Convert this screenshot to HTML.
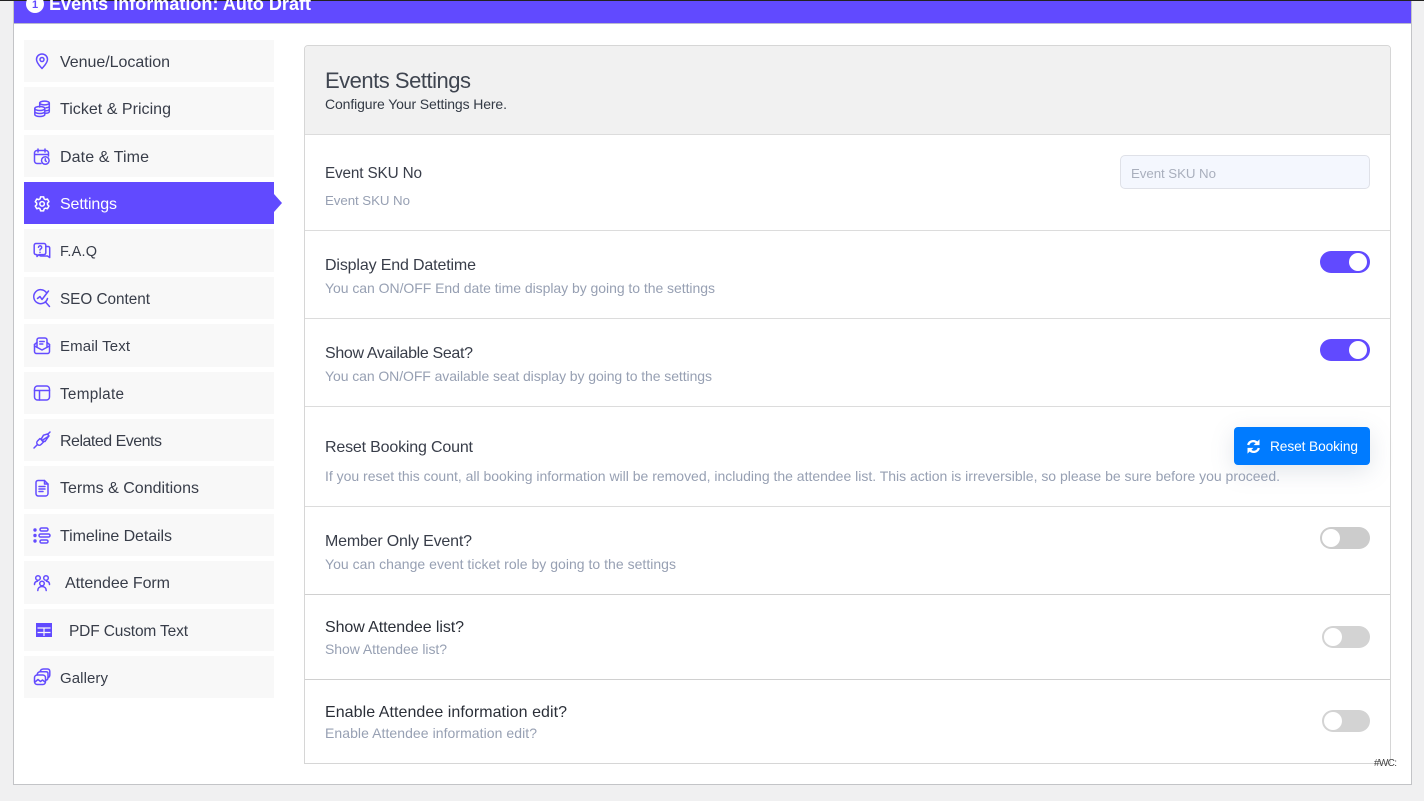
<!DOCTYPE html>
<html lang="en"><head><meta charset="utf-8"><title>Events Settings</title>
<style>
html,body{margin:0;padding:0;width:1424px;height:801px;overflow:hidden;background:#f0f0f1}
body{position:relative;font-family:"Liberation Sans",sans-serif}
.a{position:absolute;box-sizing:border-box}
.tg{position:absolute;width:50px;height:22px;border-radius:11px}
.tg i{position:absolute;top:2px;width:18px;height:18px;border-radius:50%;background:#fff}
svg{position:absolute;left:0;top:0}
text{font-family:"Liberation Sans",sans-serif}
.n{font-size:16px;fill:#383d49}
.l{font-size:16px;fill:#383d49}
.s{font-size:14px;fill:#97a0b3}
.ic{fill:none;stroke:#644cff;stroke-width:1.5;stroke-linecap:round;stroke-linejoin:round}
</style></head><body>
<div class="a" style="left:13px;top:0;width:1399px;height:785px;background:#fff;border:1px solid #c3c4c7;border-top:0"></div>
<div class="a" style="left:0;top:0;width:1424px;height:1px;background:#222"></div>
<div class="a" style="left:14px;top:1px;width:1397px;height:23px;background:#614aff;border-bottom:1px solid #b9b9d0"></div>

<div class="a" style="left:24px;top:40px;width:250px;height:42px;background:#f8f8f8"></div>
<div class="a" style="left:24px;top:87px;width:250px;height:43px;background:#f8f8f8"></div>
<div class="a" style="left:24px;top:135px;width:250px;height:42px;background:#f8f8f8"></div>
<div class="a" style="left:24px;top:182px;width:250px;height:42px;background:#614aff"></div>
<div class="a" style="left:274px;top:194px;width:0;height:0;border-left:8px solid #614aff;border-top:9px solid transparent;border-bottom:9px solid transparent"></div>
<div class="a" style="left:24px;top:229px;width:250px;height:43px;background:#f8f8f8"></div>
<div class="a" style="left:24px;top:277px;width:250px;height:42px;background:#f8f8f8"></div>
<div class="a" style="left:24px;top:324px;width:250px;height:43px;background:#f8f8f8"></div>
<div class="a" style="left:24px;top:372px;width:250px;height:42px;background:#f8f8f8"></div>
<div class="a" style="left:24px;top:419px;width:250px;height:42px;background:#f8f8f8"></div>
<div class="a" style="left:24px;top:466px;width:250px;height:43px;background:#f8f8f8"></div>
<div class="a" style="left:24px;top:514px;width:250px;height:42px;background:#f8f8f8"></div>
<div class="a" style="left:24px;top:561px;width:250px;height:43px;background:#f8f8f8"></div>
<div class="a" style="left:24px;top:609px;width:250px;height:42px;background:#f8f8f8"></div>
<div class="a" style="left:24px;top:656px;width:250px;height:42px;background:#f8f8f8"></div>

<div class="a" style="left:304px;top:45px;width:1087px;height:719px;border:1px solid #d6d6d6;border-radius:4px 4px 0 0"></div>
<div class="a" style="left:305px;top:46px;width:1085px;height:88px;background:#f1f1f1;border-radius:3px 3px 0 0"></div>
<div class="a" style="left:305px;top:134px;width:1085px;height:1px;background:#dcdcdc"></div>
<div class="a" style="left:305px;top:230px;width:1085px;height:1px;background:#dcdcdc"></div>
<div class="a" style="left:305px;top:318px;width:1085px;height:1px;background:#dcdcdc"></div>
<div class="a" style="left:305px;top:406px;width:1085px;height:1px;background:#dcdcdc"></div>
<div class="a" style="left:305px;top:506px;width:1085px;height:1px;background:#dcdcdc"></div>
<div class="a" style="left:305px;top:594px;width:1085px;height:1px;background:#d0d0d0"></div>
<div class="a" style="left:305px;top:679px;width:1085px;height:1px;background:#d0d0d0"></div>

<div class="a" style="left:1120px;top:155px;width:250px;height:34px;background:#f4f7fe;border:1px solid #dfe1e8;border-radius:5px"></div>
<div class="tg" style="left:1320px;top:251px;background:#614aff"><i style="left:29px"></i></div>
<div class="tg" style="left:1320px;top:339px;background:#614aff"><i style="left:29px"></i></div>
<div class="a" style="left:1234px;top:427px;width:136px;height:38px;background:#007bff;border-radius:4px;box-shadow:0 6px 24px rgba(90,110,140,.18)"></div>
<div class="tg" style="left:1320px;top:527px;background:#ccc"><i style="left:2px"></i></div>
<div class="tg" style="left:1322px;top:626px;width:48px;background:#d3d3d3"><i style="left:2px"></i></div>
<div class="tg" style="left:1322px;top:710px;width:48px;background:#d3d3d3"><i style="left:2px"></i></div>

<svg width="1424" height="801" viewBox="0 0 1424 801">
<circle cx="35" cy="4" r="9" fill="#fff"/>
<text x="35" y="8" font-size="11" font-weight="700" text-anchor="middle" fill="#614aff">1</text>
<text x="49" y="10" font-size="18" font-weight="700" fill="#fff" textLength="262" lengthAdjust="spacing">Events Information: Auto Draft</text>

<text class="n" x="60" y="67" textLength="110" lengthAdjust="spacing">Venue/Location</text>
<text class="n" x="60" y="114" textLength="111" lengthAdjust="spacing">Ticket &amp; Pricing</text>
<text class="n" x="60" y="162" textLength="89" lengthAdjust="spacing">Date &amp; Time</text>
<text x="60" y="209" font-size="16" fill="#fff" textLength="57" lengthAdjust="spacing">Settings</text>
<text class="n" style="font-size:14.5px" x="60" y="256" textLength="37" lengthAdjust="spacing">F.A.Q</text>
<text class="n" style="font-size:15.3px" x="60" y="304" textLength="90" lengthAdjust="spacing">SEO Content</text>
<text class="n" style="font-size:15px" x="60" y="351" textLength="70" lengthAdjust="spacing">Email Text</text>
<text class="n" style="font-size:15.3px" x="60" y="399" textLength="64" lengthAdjust="spacing">Template</text>
<text class="n" x="60" y="446" textLength="102" lengthAdjust="spacing">Related Events</text>
<text class="n" x="60" y="493" textLength="139" lengthAdjust="spacing">Terms &amp; Conditions</text>
<text class="n" x="60" y="541" textLength="112" lengthAdjust="spacing">Timeline Details</text>
<text class="n" x="65" y="588" textLength="105" lengthAdjust="spacing">Attendee Form</text>
<text class="n" style="font-size:15.500px" x="69" y="636" textLength="119" lengthAdjust="spacing">PDF Custom Text</text>
<text class="n" style="font-size:15px" x="60" y="683" textLength="48" lengthAdjust="spacing">Gallery</text>

<text x="325" y="88" font-size="22" fill="#3f4550" textLength="146" lengthAdjust="spacing">Events Settings</text>
<text x="325" y="109" font-size="14" fill="#333a45" textLength="182" lengthAdjust="spacing">Configure Your Settings Here.</text>
<text class="l" style="font-size:15.300px" x="325" y="178" textLength="97" lengthAdjust="spacing">Event SKU No</text>
<text class="s" style="font-size:13.300px" x="325" y="205" textLength="85" lengthAdjust="spacing">Event SKU No</text>
<text x="1131" y="178" font-size="13.300" fill="#a9afbd" textLength="85" lengthAdjust="spacing">Event SKU No</text>
<text class="l" x="325" y="270" textLength="151" lengthAdjust="spacing">Display End Datetime</text>
<text class="s" x="325" y="293" textLength="390" lengthAdjust="spacing">You can ON/OFF End date time display by going to the settings</text>
<text class="l" x="325" y="358" textLength="148" lengthAdjust="spacing">Show Available Seat?</text>
<text class="s" x="325" y="381" textLength="387" lengthAdjust="spacing">You can ON/OFF available seat display by going to the settings</text>
<text class="l" x="325" y="452" textLength="148" lengthAdjust="spacing">Reset Booking Count</text>
<text class="s" x="325" y="481" textLength="955" lengthAdjust="spacing">If you reset this count, all booking information will be removed, including the attendee list. This action is irreversible, so please be sure before you proceed.</text>
<text class="l" x="325" y="546" textLength="147" lengthAdjust="spacing">Member Only Event?</text>
<text class="s" x="325" y="569" textLength="351" lengthAdjust="spacing">You can change event ticket role by going to the settings</text>
<text x="325" y="632" font-size="16" fill="#2b2f38" textLength="139" lengthAdjust="spacing">Show Attendee list?</text>
<text class="s" x="325" y="654" textLength="122" lengthAdjust="spacing">Show Attendee list?</text>
<text x="325" y="717" font-size="16" fill="#2b2f38" textLength="242" lengthAdjust="spacing">Enable Attendee information edit?</text>
<text class="s" x="325" y="738" textLength="212" lengthAdjust="spacing">Enable Attendee information edit?</text>
<text x="1270" y="451" font-size="13.700" fill="#fff" textLength="88" lengthAdjust="spacing">Reset Booking</text>
<text x="1374" y="766" font-size="10" fill="#444" textLength="23" lengthAdjust="spacing">#WC:</text>

<!-- refresh -->
<g transform="translate(1247 440)" fill="none" stroke="#fff" stroke-width="2.300" stroke-linecap="butt">
<path d="M1.200 5A5.200 5.200 0 0 1 10.200 3"/><path d="M11.800 8A5.200 5.200 0 0 1 2.800 10"/>
<path d="M12 0.500V4.600H7.800z" fill="#fff" stroke-width="1"/><path d="M1 12.500V8.400H5.200z" fill="#fff" stroke-width="1"/>
</g>

<!-- pin -->
<g class="ic" transform="translate(33 52)"><path d="M9 2C5.900 2 3.500 4.400 3.500 7.400 3.500 11 6.800 14 9 16.500 11.200 14 14.500 11 14.500 7.400 14.500 4.400 12.100 2 9 2z"/><circle cx="9" cy="7.500" r="2"/></g>
<!-- coins -->
<g class="ic" transform="translate(33 100)"><ellipse cx="11.500" cy="3" rx="4.800" ry="1.900"/><path d="M6.700 3v4M16.300 3v8.500c0 1-1.500 1.700-3.300 1.800M16.300 6c0 1-1.500 1.700-3.300 1.800M16.300 9c0 1-1.500 1.700-3.300 1.800"/><ellipse cx="6.800" cy="8.500" rx="5" ry="2"/><path d="M1.800 8.500v6c0 1.100 2.200 2 5 2s5-.9 5-2v-6M1.800 11.500c0 1.100 2.200 2 5 2s5-.9 5-2"/></g>
<!-- calendar -->
<g class="ic" transform="translate(33 148)"><path d="M8 15.500H4a2.500 2.500 0 0 1-2.500-2.500V5A2.500 2.500 0 0 1 4 2.500h9A2.500 2.500 0 0 1 15.500 5v3M1.500 6.500h14M5 1v3M12 1v3"/><circle cx="12.300" cy="12.500" r="3.800"/><path d="M12.300 10.800v1.900l1 .7"/></g>
<!-- gear -->
<g class="ic" style="stroke:#fff;stroke-width:1.700" transform="translate(34 195.500) scale(.9)"><path d="M7.300 1.500h3.400l.5 2.200 1.600.9 2.100-.7 1.700 3-1.600 1.500v1.800l1.600 1.500-1.700 3-2.100-.7-1.600.9-.5 2.200H7.300l-.5-2.200-1.600-.9-2.100.7-1.700-3 1.600-1.500V8.400L1.400 6.900l1.700-3 2.100.7 1.600-.9z"/><circle cx="9" cy="9.300" r="2.500"/></g>
<!-- faq -->
<g class="ic" transform="translate(33 242)"><path d="M3 1.500h8A1.800 1.800 0 0 1 12.800 3.300v7.500A1.800 1.800 0 0 1 11 12.600H6l-2 1.900v-1.900H3a1.800 1.800 0 0 1-1.800-1.800V3.300A1.800 1.800 0 0 1 3 1.500z"/><path d="M5.500 5.300a1.600 1.600 0 1 1 2.400 1.500c-.6.300-.9.600-.9 1.200M7 10.300v.1"/><path d="M12.800 4.500h2.400a1.500 1.500 0 0 1 1.500 1.500v9.500l-2.200-1.500H8a1.500 1.500 0 0 1-1.500-1.400"/></g>
<!-- seo -->
<g class="ic" transform="translate(33 289)"><path d="M13.500 3.700A7 7 0 1 0 14.500 9.500"/><path d="M4.500 9.500L7 7.500l2 3 6.500-8.500M12.500 13l4 4.500"/></g>
<!-- email -->
<g class="ic" transform="translate(33 337)"><path d="M1.500 7.500v7A2 2 0 0 0 3.500 16.500h11a2 2 0 0 0 2-2v-7"/><path d="M1.500 7.500l2.500-2M16.500 7.500l-2.500-2M1.500 9l7.500 4 7.500-4"/><path d="M4 10V3A2 2 0 0 1 6 1h6A2 2 0 0 1 14 3v7"/><path d="M6.800 4.500h4.400M6.800 7h3"/></g>
<!-- template -->
<g class="ic" transform="translate(33 384)"><rect x="1.500" y="2" width="15" height="14" rx="3"/><path d="M1.500 6.500h15M6.500 6.500V16"/></g>
<!-- related -->
<g class="ic" transform="translate(33 431)"><path d="M1 17l3.500-3.500M17 1l-2.500 2.500"/><path d="M7 7.500L4.500 10a2.500 2.500 0 0 0 0 3.500 2.500 2.500 0 0 0 3.500 0L10.500 11z"/><path d="M10.500 8.500L16 5l-1.500-2-4 1.200-2 3.300 1 2.500 2.500.5 3.500-5"/></g>
<!-- terms -->
<g class="ic" transform="translate(33 479)"><path d="M5 1.500h6.500L15 5v9.500a2.500 2.500 0 0 1-2.500 2.500h-7.500A2.500 2.500 0 0 1 3 14.500V3.500A2 2 0 0 1 5 1.500z"/><path d="M11.500 1.500V5H15M6 7.500h6M6 10h6M6 12.500h4"/></g>
<!-- timeline -->
<g class="ic" transform="translate(33 527)"><rect x="7" y="1" width="8" height="3" rx="1.500"/><rect x="6" y="7" width="11" height="3" rx="1.500"/><rect x="7" y="13" width="8" height="3" rx="1.500"/></g>
<g fill="#644cff"><circle cx="35" cy="530" r="1.700"/><circle cx="35" cy="535.500" r="1.700"/><circle cx="35" cy="541" r="1.700"/></g>
<!-- attendee -->
<g class="ic" transform="translate(33 574)"><circle cx="5" cy="4" r="2.300"/><circle cx="13" cy="4" r="2.300"/><circle cx="9" cy="9.500" r="2.300"/><path d="M1.500 10.500c0-2 1.200-3.200 3-3.300M16.500 10.500c0-2-1.200-3.200-3-3.300M4.800 16.500c0-2.500 1.800-4 4.200-4s4.200 1.500 4.200 4"/></g>
<!-- pdf table -->
<rect x="36" y="623" width="16" height="14" fill="#614aff"/>
<path d="M37.500 628h13M37.500 632.500h13M44 628V636" stroke="#f8f8f8" stroke-width="1.200" fill="none"/>
<!-- gallery -->
<g class="ic" transform="translate(33 668)"><rect x="1.500" y="7" width="11" height="9.500" rx="2.800"/><path d="M4 7c.3-2 1.500-3.300 3.500-3.300h5.500c1.500 0 2 .5 2 1.800v4c0 1.500-.8 2.500-2.200 2.800"/><path d="M7 3.700C7.500 2 8.800 1 10.500 1h4C16 1 16.800 2 16.800 3.500v3.500c0 1.400-.6 2.200-1.800 2.600"/><path d="M2 14l3-2.500 2.500 2 2-1.500 2.500 2"/></g>
</svg>
</body></html>
